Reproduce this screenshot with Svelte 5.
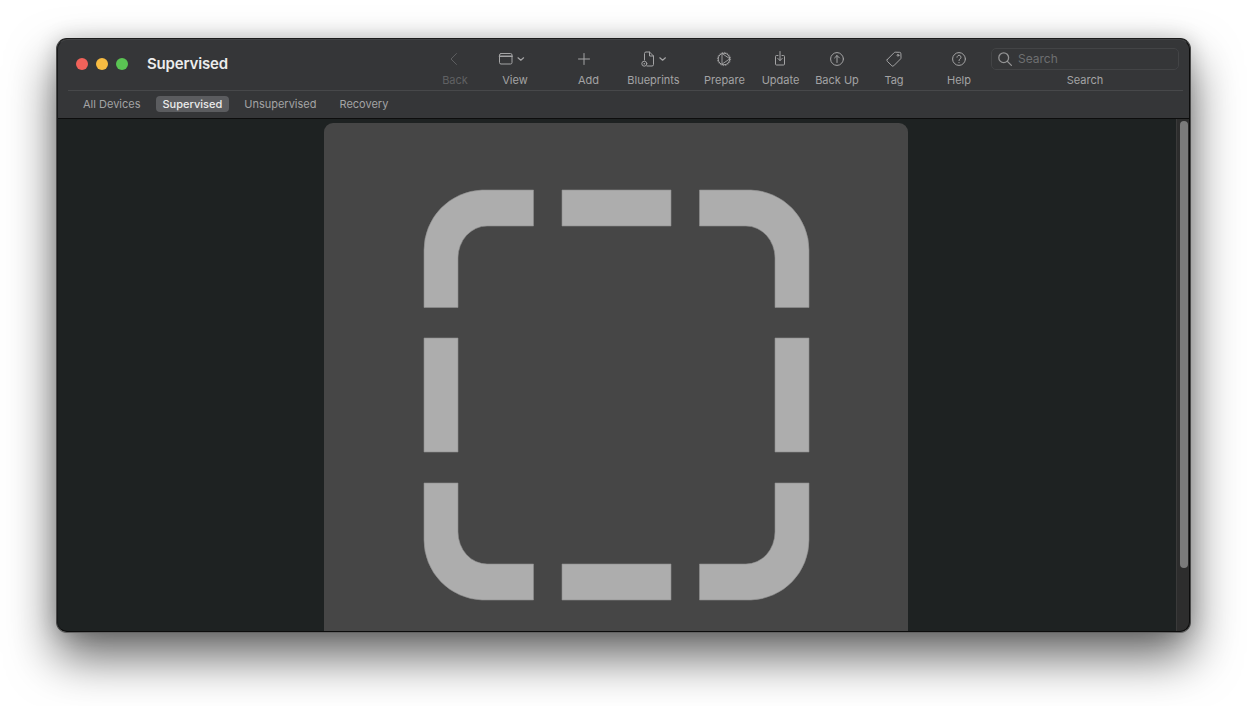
<script>
  const tabs = ['All Devices', 'Supervised', 'Unsupervised', 'Recovery'];
</script>

<div class="page">
  <div class="window">
    <header class="head">
      <div class="toolbar">
        <div class="lights">
          <span class="light red"></span>
          <span class="light yellow"></span>
          <span class="light green"></span>
        </div>
        <h1 class="title">Supervised</h1>

        <div class="tool back disabled">
          <svg class="ico shift2" width="20" height="20" viewBox="0 0 20 20"><path d="M12.500 4.500 7 10l5.500 5.500" /></svg>
          <span>Back</span>
        </div>
        <div class="tool view">
          <svg class="ico shift6" width="28" height="20" viewBox="0 0 28 20"><rect x="1.500" y="4.500" width="12.500" height="10.500" rx="1.500" /><path d="M1.500 7.200H14" stroke-width="1.600" /><path d="M20 8.800l2.800 2.400 2.800-2.400" stroke-width="1.200" /></svg>
          <span>View</span>
        </div>
        <div class="tool add">
          <svg class="ico shift9" width="20" height="20" viewBox="0 0 20 20"><path d="M10 4.500v11M4.500 10h11" /></svg>
          <span>Add</span>
        </div>
        <div class="tool blue">
          <svg class="ico" width="28" height="20" viewBox="0 0 28 20"><path d="M4.500 11V4.500A1.500 1.500 0 0 1 6 3h3.500l4 4v8.500a1.500 1.500 0 0 1-1.500 1.500H7" /><path d="M9.500 3v4h4" /><circle cx="4.300" cy="14.700" r="2.500" /><circle class="dot" cx="4.300" cy="14.700" r=".8" /><path d="M19.800 8.800l2.800 2.400 2.800-2.400" stroke-width="1.200" /></svg>
          <span>Blueprints</span>
        </div>
        <div class="tool prepare">
          <svg class="ico shift1" width="20" height="20" viewBox="0 0 20 20"><circle cx="10" cy="10" r="5.800" /><circle cx="10" cy="10" r="6.600" stroke-dasharray="1.300 1.290" stroke-width=".8" stroke-linecap="butt" /><path d="M8 4.800v10.400L15.500 10z" stroke-width=".9" /></svg>
          <span>Prepare</span>
        </div>
        <div class="tool update">
          <svg class="ico shift1" width="20" height="20" viewBox="0 0 20 20"><path d="M8 6.500H6.500a1 1 0 0 0-1 1v7.500a1 1 0 0 0 1 1h7a1 1 0 0 0 1-1V7.500a1 1 0 0 0-1-1H12" /><path d="M10 2.500v9M7.800 9.400l2.200 2.200 2.200-2.200" /></svg>
          <span>Update</span>
        </div>
        <div class="tool backup">
          <svg class="ico" width="20" height="20" viewBox="0 0 20 20"><circle cx="10" cy="10" r="6.400" /><path d="M10 13.500V6.600M7.600 8.900 10 6.500l2.400 2.400" /></svg>
          <span>Back Up</span>
        </div>
        <div class="tool tag">
          <svg class="ico" width="20" height="20" viewBox="0 0 20 20"><path d="M3.300 10.500 10.200 3.600a1.500 1.500 0 0 1 1.100-.4l4.200.1a1.400 1.400 0 0 1 1.400 1.400l.1 4.100a1.500 1.500 0 0 1-.4 1.100l-6.900 6.900a1.300 1.300 0 0 1-1.800 0l-4.600-4.500a1.300 1.300 0 0 1 0-1.800z" /><circle cx="14" cy="6.300" r=".9" /></svg>
          <span>Tag</span>
        </div>
        <div class="tool help">
          <svg class="ico" width="20" height="20" viewBox="0 0 20 20"><circle cx="10" cy="10" r="6.400" /><path d="M8 8.200a2 2 0 1 1 3.100 1.700c-.8.500-1.100.9-1.100 1.700" /><circle class="dot" cx="10" cy="13.600" r=".6" /></svg>
          <span>Help</span>
        </div>
        <div class="tool search">
          <div class="field">
            <svg class="ico" width="16" height="16" viewBox="0 0 16 16"><circle cx="6.700" cy="6.700" r="4.900" /><path d="m10.400 10.400 4 4" /></svg>
            <span class="ph">Search</span>
          </div>
          <span>Search</span>
        </div>
      </div>

      <nav class="tabs">
        {#each tabs as t}
          <span class="tab" class:on={t === 'Supervised'}>{t}</span>
        {/each}
      </nav>
    </header>

    <div class="body">
      <main class="main">
        <div class="card">
          <svg class="mark" width="584" height="584" viewBox="324 123 584 584">
            <path d="M424 307.500V250a60 60 0 0 1 58-60h51.500v36H487a29 32 0 0 0-29 32v49.500z" />
            <path d="M562 190h109v36H562z" />
            <path d="M809 307.500V250a60 60 0 0 0-58-60h-51.500v36H746a29 32 0 0 1 29 32v49.500z" />
            <path d="M424 338h34v114h-34z" />
            <path d="M775 338h34v114h-34z" />
            <path d="M424 483v57a60 60 0 0 0 58 60h51.500v-36H487a29 32 0 0 1-29-32v-49z" />
            <path d="M562 564h109v36H562z" />
            <path d="M809 483v57a60 60 0 0 1-58 60h-51.500v-36H746a29 32 0 0 0 29-32v-49z" />
          </svg>
        </div>
      </main>
      <aside class="gutter"><div class="thumb"></div></aside>
    </div>
  </div>
</div>

<style>
  :global(body) { margin: 0; background: #fff; overflow: hidden; }
  .page { width: 1247px; height: 706px; padding: 38px 56px 0; box-sizing: border-box; font-family: Inter, "Liberation Sans", sans-serif; }
  .window {
    position: relative;
    width: 1135px; height: 595px; box-sizing: border-box;
    display: flex; flex-direction: column; overflow: hidden;
    border-radius: 11px; border: 1px solid #4a4a4a; border-top-color: #1c1c1c; border-bottom-color: #636363;
    box-shadow: 0 24px 48px rgba(0,0,0,.6), 0 0 20px rgba(0,0,0,.16);
    background: #1e2222;
  }
  .window::after {
    content: ""; position: absolute; inset: 0; pointer-events: none;
    border: 1px solid #0c0c0c; border-top-color: rgba(255,255,255,.07); border-left-color: #18191a;
    border-radius: 10px;
  }
  .head { background: #353638; border-bottom: 1px solid #0d0d0d; height: 80px; box-sizing: border-box; display: flex; flex-direction: column; flex: none; }
  .toolbar { height: 52px; margin: 0 7px 0 11px; border-bottom: 1px solid #47484a; display: flex; align-items: flex-start; box-sizing: border-box; }
  .lights { display: flex; gap: 8px; margin: 19px 0 0 8px; }
  .light { width: 12px; height: 12px; border-radius: 50%; }
  .red { background: #f1625a; }
  .yellow { background: #f8bc42; }
  .green { background: #5ac453; }
  .title { margin: 15px 0 0 19px; width: 295px; font-size: 15px; line-height: 20px; font-weight: 600; color: #ececec; letter-spacing: -.16px; }

  .tool { display: flex; flex-direction: column; align-items: center; font-size: 11px; line-height: 14px; color: #a3a3a4; white-space: nowrap; padding-top: 10px; flex: none; }
  .tool > span { margin-top: 4px; }
  .ico { fill: none; stroke: #a4a4a5; stroke-width: 1; stroke-linecap: round; stroke-linejoin: round; flex: none; }
  .dot { fill: #a4a4a5; stroke: none; }
  .shift1 { margin-right: 1px; }
  .shift2 { margin-right: 2px; }
  .shift6 { margin-right: 6px; }
  .shift9 { margin-right: 9px; }
  .disabled { color: #606163; }
  .disabled .ico { stroke: #5d5e60; }
  .back { width: 26px; }
  .view { width: 26px; margin-left: 34px; }
  .add { width: 21px; margin-left: 50px; }
  .blue { width: 53px; margin-left: 28px; }
  .prepare { width: 41px; margin-left: 24px; }
  .update { width: 39px; margin-left: 16px; }
  .backup { width: 44px; margin-left: 15px; }
  .tag { width: 18px; margin-left: 26px; }
  .help { width: 24px; margin-left: 44px; }
  .search { width: 188px; margin-left: 20px; padding-top: 9px; }
  .search > span { margin-top: 3px; }
  .field { width: 188px; height: 22px; box-sizing: border-box; border: 1px solid #434446; border-radius: 5px; display: flex; align-items: center; padding-left: 5px; gap: 5px; }
  .field .ico { stroke: #939394; stroke-width: 1.3; }
  .ph { font-size: 12px; color: #6e6f71; }

  .tabs { flex: 1; display: flex; align-items: center; gap: 8px; padding: 0 0 2px 19px; }
  .tab { height: 16px; line-height: 16px; padding: 0 7px; border-radius: 4px; font-family: Inter, sans-serif; font-size: 11px; color: #a3a3a4; }
  .tab:last-child { margin-left: 1px; }
  .tab.on { background: #5b5c5f; color: #ececec; font-weight: 500; }

  .body { flex: 1; min-height: 0; display: flex; }
  .main { flex: 1; display: flex; justify-content: center; padding: 4px 1px 0 0; overflow: hidden; }
  .card { width: 584px; height: 584px; flex: none; background: #464646; border-radius: 9px; overflow: hidden; }
  .mark { display: block; }
  .mark path { fill: #adadad; stroke: #8e8e8e; stroke-width: .6; }
  .gutter { width: 14px; flex: none; background: #2d2d2d; border-left: 1px solid #3a3a3a; box-sizing: border-box; padding: 2px 2px 0 3px; }
  .thumb { width: 8px; height: 447px; border-radius: 4px; background: #7b7b7b; }
</style>
